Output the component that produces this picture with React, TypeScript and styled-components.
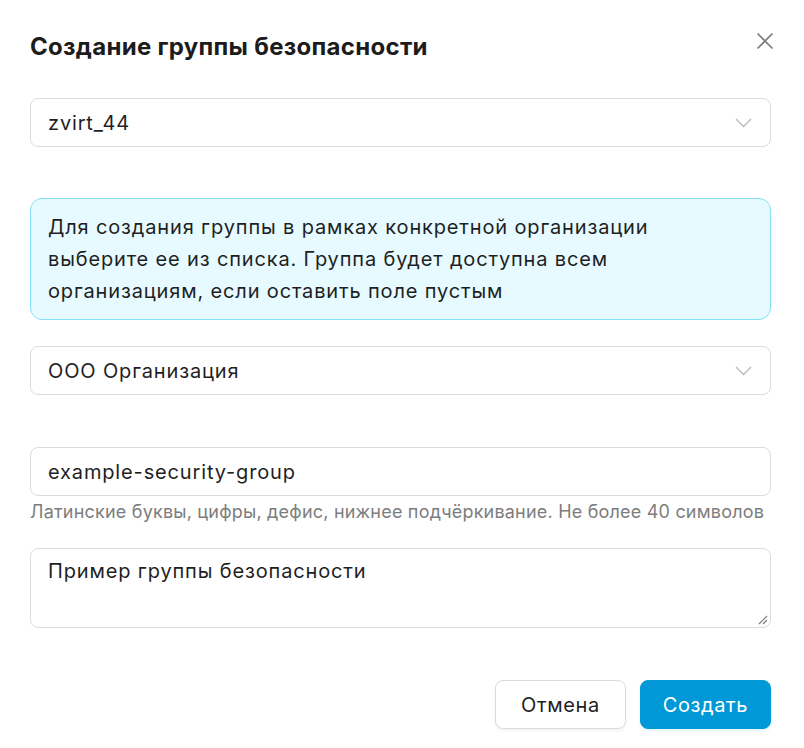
import React from 'react';
import styled, { createGlobalStyle } from 'styled-components';

const GlobalStyle = createGlobalStyle`
  html, body {
    margin: 0;
    padding: 0;
    background: #ffffff;
  }
  body {
    font-family: Inter, "Noto Sans", "Liberation Sans", sans-serif;
    color: #1f1f1f;
  }
  * {
    box-sizing: border-box;
  }
`;

const Modal = styled.div`
  width: 804px;
  min-height: 748px;
  padding: 30px 33px 20px 30px;
  display: flex;
  flex-direction: column;
`;

const Header = styled.div`
  display: flex;
  align-items: flex-start;
  justify-content: space-between;
  margin-bottom: 37px;
`;

const Title = styled.h1`
  margin: 3px 0 0;
  font-size: 24px;
  line-height: 28px;
  font-weight: 700;
  letter-spacing: 0.3px;
  color: #1c1c1c;
`;

const CloseButton = styled.button`
  width: 20px;
  height: 20px;
  margin-right: -4px;
  margin-top: 1px;
  padding: 0;
  border: none;
  background: transparent;
  display: flex;
  align-items: center;
  justify-content: center;
  cursor: pointer;
`;

const Field = styled.div<{ $gap: number }>`
  margin-bottom: ${p => p.$gap}px;
`;

const Box = styled.div`
  height: 49px;
  border: 1px solid #dcdcdc;
  border-radius: 8px;
  display: flex;
  align-items: center;
  justify-content: space-between;
  padding: 0 18px 0 17px;
  font-size: 20px;
  letter-spacing: 0.85px;
  color: #1f1f1f;
`;

const TextArea = styled.div`
  position: relative;
  height: 80px;
  border: 1px solid #dcdcdc;
  border-radius: 8px;
  padding: 9px 17px;
  font-size: 20px;
  line-height: 26px;
  letter-spacing: 0.85px;
  color: #1f1f1f;
`;

const Resize = styled.svg`
  position: absolute;
  right: 2px;
  bottom: 2px;
`;

const Hint = styled.div`
  margin-top: 5px;
  font-size: 18px;
  line-height: 22px;
  letter-spacing: 0.2px;
  color: #7d7d7d;
  white-space: nowrap;
`;

const Info = styled.div`
  background: #e6faff;
  border: 1px solid #86e0f7;
  border-radius: 12px;
  padding: 12px 17px;
  font-size: 20px;
  line-height: 32px;
  letter-spacing: 0.85px;
  color: #1f1f1f;
`;

const Footer = styled.div`
  display: flex;
  justify-content: flex-end;
  gap: 14px;
  margin-top: 52px;
`;

const Button = styled.button<{ $primary?: boolean }>`
  height: 49px;
  padding: 0 ${p => (p.$primary ? 22 : 25)}px;
  border-radius: 8px;
  font-family: inherit;
  font-size: 20px;
  letter-spacing: 0.6px;
  cursor: pointer;
  border: 1px solid ${p => (p.$primary ? '#0098d6' : '#dcdcdc')};
  background: ${p => (p.$primary ? '#0098d6' : '#ffffff')};
  color: ${p => (p.$primary ? '#ffffff' : '#1f1f1f')};
  box-shadow: 0 2px 3px ${p => (p.$primary ? 'rgba(0, 170, 230, 0.12)' : 'rgba(0, 0, 0, 0.05)')};
`;

const Chevron = () => (
  <svg width="17" height="10" viewBox="0 0 17 10" fill="none">
    <path d="M1 1l7.5 7.5L16 1" stroke="#b8b8b8" strokeWidth="1.3" />
  </svg>
);

const Select = ({ value }: { value: string }) => (
  <Box>
    <span>{value}</span>
    <Chevron />
  </Box>
);

export default function App() {
  return (
    <>
      <GlobalStyle />
      <Modal>
        <Header>
          <Title>Создание группы безопасности</Title>
          <CloseButton aria-label="Закрыть">
            <svg width="18" height="18" viewBox="0 0 18 18" fill="none">
              <path d="M1.5 1.5l15 15M16.5 1.5l-15 15" stroke="#7a7a7a" strokeWidth="1.6" />
            </svg>
          </CloseButton>
        </Header>

        <Field $gap={51}>
          <Select value="zvirt_44" />
        </Field>

        <Field $gap={26}>
          <Info>
            Для создания группы в рамках конкретной организации
            <br />
            выберите ее из списка. Группа будет доступна всем
            <br />
            организациям, если оставить поле пустым
          </Info>
        </Field>

        <Field $gap={52}>
          <Select value="ООО Организация" />
        </Field>

        <Field $gap={25}>
          <Box>example-security-group</Box>
          <Hint>Латинские буквы, цифры, дефис, нижнее подчёркивание. Не более 40 символов</Hint>
        </Field>

        <TextArea>
          Пример группы безопасности
          <Resize width="12" height="12" viewBox="0 0 12 12">
            <path d="M11 3L3 11M11 7L7 11" stroke="#7a7a7a" strokeWidth="1.2" />
          </Resize>
        </TextArea>

        <Footer>
          <Button>Отмена</Button>
          <Button $primary>Создать</Button>
        </Footer>
      </Modal>
    </>
  );
}
